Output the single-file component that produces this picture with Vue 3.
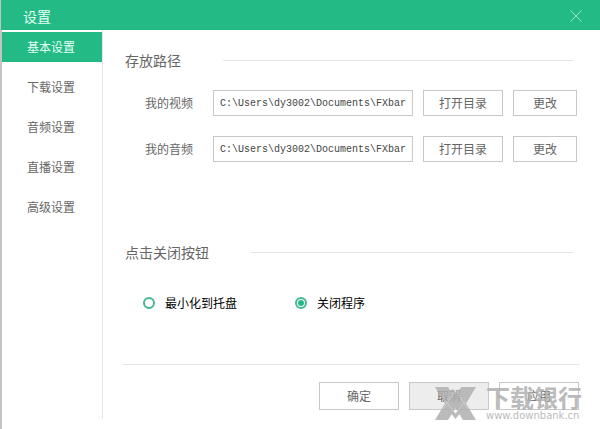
<script setup>
import { ref } from 'vue'

const tabs = ['基本设置', '下载设置', '音频设置', '直播设置', '高级设置']
const activeTab = ref(0)
const closeAction = ref('exit')
const paths = ref([
  { id: 'video', label: '我的视频', value: 'C:\\Users\\dy3002\\Documents\\FXbar' },
  { id: 'audio', label: '我的音频', value: 'C:\\Users\\dy3002\\Documents\\FXbar' },
])
const closeOptions = [
  { value: 'tray', label: '最小化到托盘' },
  { value: 'exit', label: '关闭程序' },
]
</script>

<template>
  <div class="window">
    <header class="titlebar">
      <h1>设置</h1>
      <button class="close" type="button" aria-label="关闭">
        <svg width="12" height="12" viewBox="0 0 12 12">
          <path d="M0.5 0.5L11.5 11.5M11.5 0.5L0.5 11.5" fill="none" stroke="#9fe3c9" stroke-width="1" />
        </svg>
      </button>
    </header>

    <div class="body">
      <nav class="sidebar">
        <button
          v-for="(tab, i) in tabs"
          :key="tab"
          type="button"
          class="tab"
          :class="{ active: i === activeTab }"
          @click="activeTab = i"
        >{{ tab }}</button>
      </nav>

      <main class="main">
        <section class="storage">
          <div class="heading"><h2>存放路径</h2><span class="rule"></span></div>
          <div class="rows">
            <div v-for="p in paths" :key="p.id" class="row">
              <label :for="p.id">{{ p.label }}</label>
              <input :id="p.id" v-model="p.value" class="path" type="text" spellcheck="false" />
              <button type="button" class="btn open">打开目录</button>
              <button type="button" class="btn change">更改</button>
            </div>
          </div>
        </section>

        <section>
          <div class="heading"><h2>点击关闭按钮</h2><span class="rule"></span></div>
          <div class="options">
            <label v-for="o in closeOptions" :key="o.value" class="option">
              <input v-model="closeAction" type="radio" name="close-action" :value="o.value" />
              <span>{{ o.label }}</span>
            </label>
          </div>
        </section>

        <footer class="footer">
          <button type="button" class="btn">确定</button>
          <button type="button" class="btn shaded">取消</button>
          <button type="button" class="btn">应用</button>
        </footer>
      </main>
    </div>

    <div class="watermark">
      <svg width="41" height="33" viewBox="0 0 41 33">
        <path d="M0 0H13L20.500 12L26 0H41L31 16.500L41 33H28L20.500 21L13 33H0L10 16.500Z" fill="#b0b0b0" />
        <path d="M12 0L15 4L18 2L20.500 6L24 2L26 4L20.500 14Z" fill="#b0b0b0" />
        <path d="M8 22L20.500 3L33 22M11 14L20.500 27L30 14" fill="none" stroke="#c8c8c8" stroke-width="1" />
        <path d="M14 24L17 23L20.500 27L24 23L27 24L20.500 32Z" fill="#b0b0b0" />
      </svg>
      <div class="brand">
        <span class="brand-name">下载银行</span>
        <span class="brand-url">www.downbank.cn</span>
      </div>
    </div>
  </div>
</template>

<style>
body {
  margin: 0;
  background: #fff;
}
</style>

<style scoped>
.window {
  position: relative;
  display: flex;
  flex-direction: column;
  box-sizing: border-box;
  min-height: 100vh;
  border-left: 2px solid #c4c4c4;
  background: #fff;
  color: #666;
  font: 12px/20px "Noto Sans CJK SC", sans-serif;
}
.window * {
  box-sizing: border-box;
}
button,
input {
  margin: 0;
  padding: 0;
  font: inherit;
  color: inherit;
}
h1,
h2 {
  margin: 0;
  font-size: 14px;
  font-weight: 400;
  line-height: 20px;
}
.titlebar {
  display: flex;
  align-items: center;
  justify-content: space-between;
  height: 30px;
  margin-left: -1px;
  padding: 2px 18px 0 22px;
  background: #23ba86;
  color: #e6fff5;
}
.close {
  display: flex;
  border: 0;
  background: none;
}
.body {
  display: flex;
  flex: 1;
}
.sidebar {
  display: flex;
  flex-direction: column;
  gap: 10px;
  width: 101px;
  margin-bottom: 10px;
  padding-top: 2px;
  border-right: 1px solid #e6e6e6;
}
.tab {
  height: 30px;
  padding-right: 2px;
  border: 0;
  background: none;
}
.tab.active {
  background: #23ba86;
  color: #e6fff5;
}
.main {
  flex: 1;
  min-width: 0;
  padding: 20px 20px 0;
}
.storage {
  margin-bottom: 80px;
}
.heading {
  display: flex;
  align-items: center;
  gap: 42px;
  padding: 0 7px 0 2px;
}
.rule {
  flex: 1;
  height: 1px;
  background: #e6e6e6;
}
.rows {
  display: grid;
  gap: 20px;
  padding: 20px 3px 0 22px;
}
.row {
  display: flex;
  gap: 10px;
  align-items: center;
}
.row label {
  width: 58px;
}
.path {
  flex: 1;
  min-width: 0;
  height: 26px;
  padding: 0 6px;
  border: 1px solid #c8c8c8;
  background: #fff;
  color: #444;
  font: 10px "Liberation Mono", monospace;
}
.btn {
  width: 80px;
  height: 28px;
  border: 1px solid #c8c8c8;
  background: #fff;
  line-height: 20px;
}
.row .btn {
  height: 26px;
}
.row .change {
  width: 64px;
}
.btn.shaded {
  background: #ededed;
}
.options {
  display: flex;
  gap: 58px;
  padding: 31px 0 0 20px;
  color: #000;
}
.option {
  display: flex;
  align-items: center;
  gap: 10px;
}
.option input {
  appearance: none;
  display: grid;
  place-items: center;
  width: 12px;
  height: 12px;
  border: 2px solid #45b890;
  border-radius: 50%;
}
.option input:checked::before {
  content: "";
  width: 6px;
  height: 6px;
  border-radius: 50%;
  background: #23ba86;
}
.footer {
  display: flex;
  justify-content: flex-end;
  gap: 10px;
  margin-top: 51px;
  padding: 17px 1px 0 0;
  border-top: 1px solid #e6e6e6;
}
.watermark {
  position: absolute;
  right: 18px;
  bottom: 7px;
  display: flex;
  gap: 10px;
  align-items: center;
  opacity: 0.85;
  color: #b0b0b0;
  pointer-events: none;
}
.brand {
  display: flex;
  flex-direction: column;
}
.brand-name {
  font-size: 24px;
  font-weight: 700;
  line-height: 26px;
}
.brand-url {
  font: 10px/12px "DejaVu Sans", sans-serif;
}
</style>
